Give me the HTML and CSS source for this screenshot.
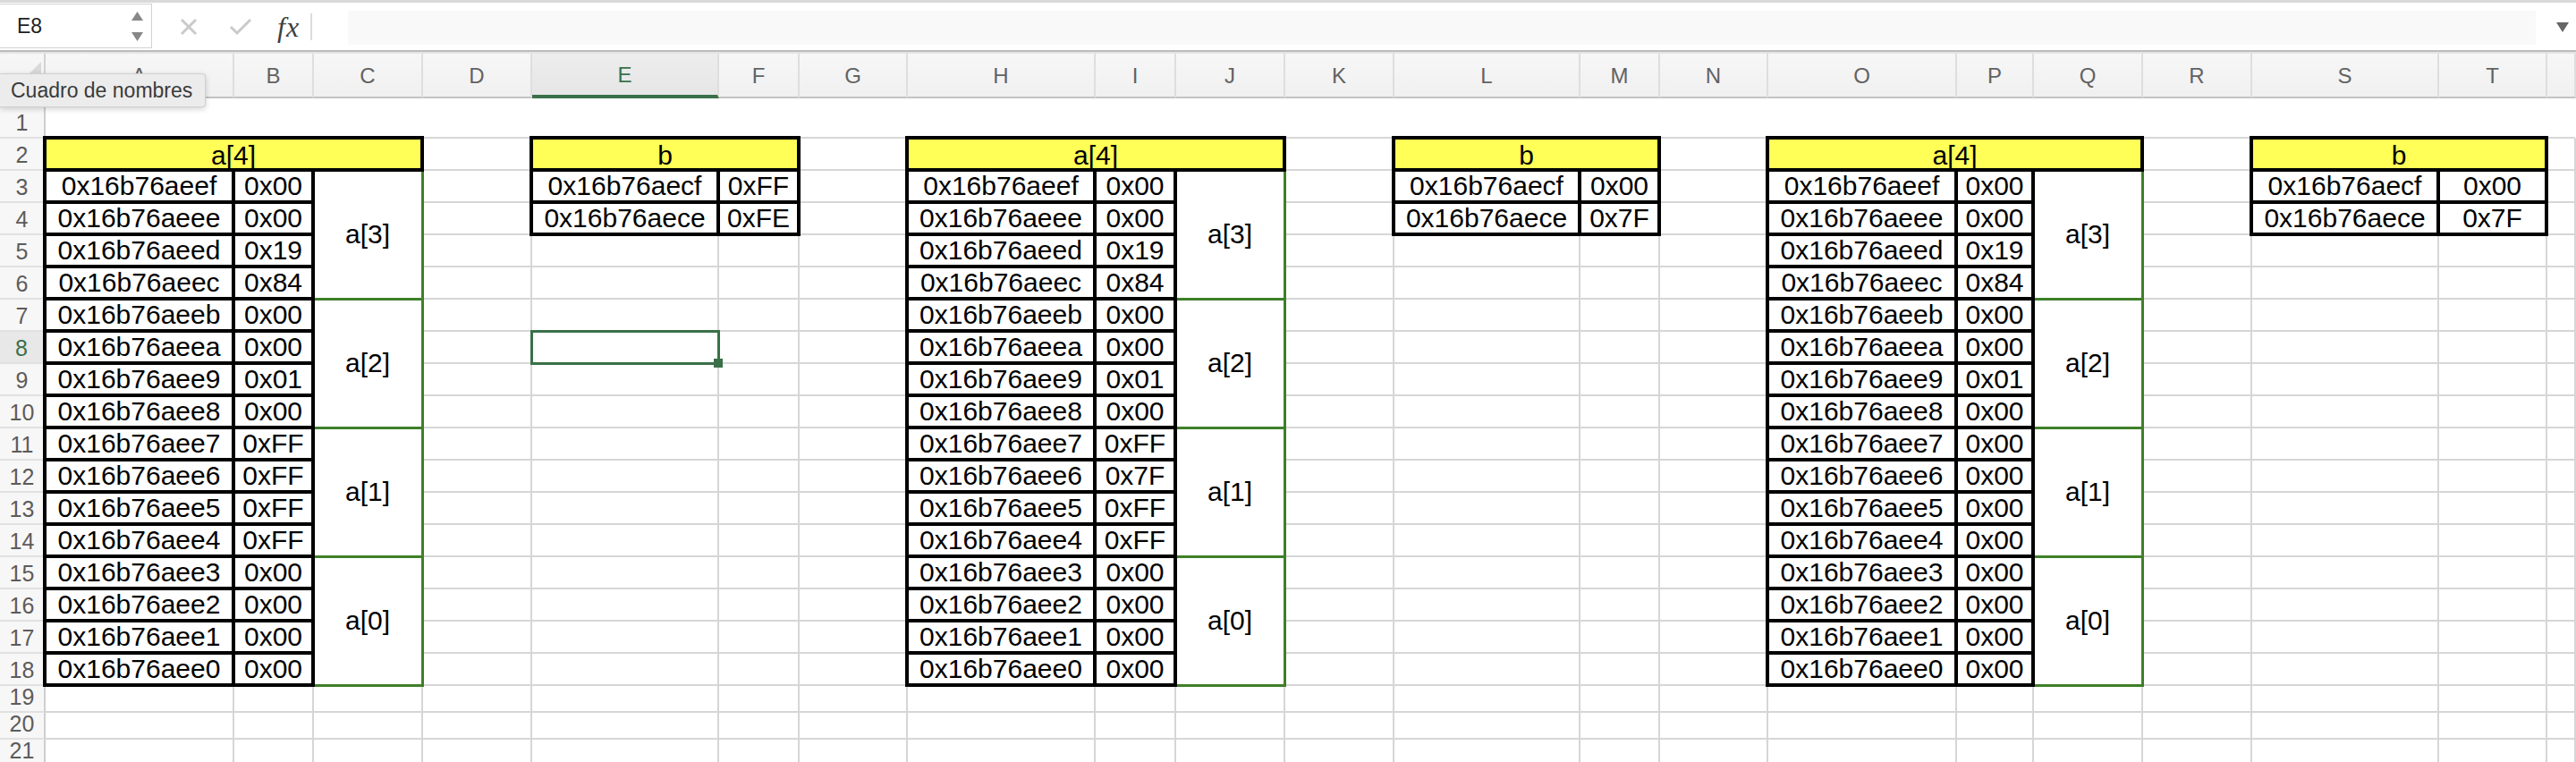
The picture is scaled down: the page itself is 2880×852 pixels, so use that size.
FILE: index.html
```html
<!DOCTYPE html>
<html lang="es">
<head>
<meta charset="utf-8">
<title>Hoja</title>
<link rel="stylesheet" href="styles.css">
</head>
<body>
<div class="app">
  <div class="toolbar">
    <div class="namebox">
      <span class="ref">E8</span>
      <span class="spin">
        <svg width="13" height="10" viewBox="0 0 13 10"><polygon points="6.5,0 13,10 0,10" fill="#888"/></svg>
        <svg width="13" height="10" viewBox="0 0 13 10"><polygon points="0,0 13,0 6.5,10" fill="#888"/></svg>
      </span>
    </div>
    <div class="fbtns">
      <svg class="ic-x" width="22" height="20" viewBox="0 0 22 20"><path d="M3 2 L19 18 M19 2 L3 18" stroke="#cacaca" stroke-width="3" fill="none"/></svg>
      <svg class="ic-ok" width="28" height="20" viewBox="0 0 28 20"><path d="M3 10 L10 17 L25 2" stroke="#cacaca" stroke-width="3" fill="none"/></svg>
      <span class="fx">fx</span>
      <span class="vsep"></span>
    </div>
    <div class="formula"></div>
    <svg class="drop" width="14" height="11" viewBox="0 0 14 11"><polygon points="0,0 14,0 7,11" fill="#666"/></svg>
  </div>
  <div class="divider"></div>

  <div class="sheet">
    <div class="corner"><svg width="34" height="34" viewBox="0 0 34 34"><polygon points="34,0 34,34 0,34" fill="#d9d9d9"/></svg></div>
    <div class="ch">A</div><div class="ch">B</div><div class="ch">C</div><div class="ch">D</div><div class="ch sc">E</div><div class="ch">F</div><div class="ch">G</div><div class="ch">H</div><div class="ch">I</div><div class="ch">J</div><div class="ch">K</div><div class="ch">L</div><div class="ch">M</div><div class="ch">N</div><div class="ch">O</div><div class="ch">P</div><div class="ch">Q</div><div class="ch">R</div><div class="ch">S</div><div class="ch">T</div><div class="ch"></div>

    <div class="rh lo">1</div><div class="r1"></div><div class="r1"></div><div class="r1"></div><div class="r1"></div><div class="r1"></div><div class="r1"></div><div class="r1"></div><div class="r1"></div><div class="r1"></div><div class="r1"></div><div class="r1"></div><div class="r1"></div><div class="r1"></div><div class="r1"></div><div class="r1"></div><div class="r1"></div><div class="r1"></div><div class="r1"></div><div class="r1"></div><div class="r1"></div><div class="r1"></div>

    <div class="rh">2</div><div class="hd s3">a[4]</div><div></div><div class="hd s2">b</div><div></div><div class="hd s3">a[4]</div><div></div><div class="hd s2">b</div><div></div><div class="hd s3">a[4]</div><div></div><div class="hd s2">b</div><div></div>

    <div class="rh">3</div><div class="t">0x16b76aeef</div><div class="t">0x00</div><div class="g">a[3]</div><div></div><div class="t">0x16b76aecf</div><div class="t">0xFF</div><div></div><div class="t">0x16b76aeef</div><div class="t">0x00</div><div class="g">a[3]</div><div></div><div class="t">0x16b76aecf</div><div class="t">0x00</div><div></div><div class="t">0x16b76aeef</div><div class="t">0x00</div><div class="g">a[3]</div><div></div><div class="t">0x16b76aecf</div><div class="t">0x00</div><div></div>

    <div class="rh">4</div><div class="t">0x16b76aeee</div><div class="t">0x00</div><div></div><div class="t">0x16b76aece</div><div class="t">0xFE</div><div></div><div class="t">0x16b76aeee</div><div class="t">0x00</div><div></div><div class="t">0x16b76aece</div><div class="t">0x7F</div><div></div><div class="t">0x16b76aeee</div><div class="t">0x00</div><div></div><div class="t">0x16b76aece</div><div class="t">0x7F</div><div></div>

    <div class="rh">5</div><div class="t">0x16b76aeed</div><div class="t">0x19</div><div></div><div></div><div></div><div></div><div class="t">0x16b76aeed</div><div class="t">0x19</div><div></div><div></div><div></div><div></div><div class="t">0x16b76aeed</div><div class="t">0x19</div><div></div><div></div><div></div><div></div>

    <div class="rh">6</div><div class="t">0x16b76aeec</div><div class="t">0x84</div><div></div><div></div><div></div><div></div><div class="t">0x16b76aeec</div><div class="t">0x84</div><div></div><div></div><div></div><div></div><div class="t">0x16b76aeec</div><div class="t">0x84</div><div></div><div></div><div></div><div></div>

    <div class="rh">7</div><div class="t">0x16b76aeeb</div><div class="t">0x00</div><div class="g">a[2]</div><div></div><div></div><div></div><div></div><div class="t">0x16b76aeeb</div><div class="t">0x00</div><div class="g">a[2]</div><div></div><div></div><div></div><div></div><div class="t">0x16b76aeeb</div><div class="t">0x00</div><div class="g">a[2]</div><div></div><div></div><div></div><div></div>

    <div class="rh sr">8</div><div class="t">0x16b76aeea</div><div class="t">0x00</div><div></div><div class="sel"><span class="handle"></span></div><div></div><div></div><div class="t">0x16b76aeea</div><div class="t">0x00</div><div></div><div></div><div></div><div></div><div class="t">0x16b76aeea</div><div class="t">0x00</div><div></div><div></div><div></div><div></div>

    <div class="rh">9</div><div class="t">0x16b76aee9</div><div class="t">0x01</div><div></div><div></div><div></div><div></div><div class="t">0x16b76aee9</div><div class="t">0x01</div><div></div><div></div><div></div><div></div><div class="t">0x16b76aee9</div><div class="t">0x01</div><div></div><div></div><div></div><div></div>

    <div class="rh">10</div><div class="t">0x16b76aee8</div><div class="t">0x00</div><div></div><div></div><div></div><div></div><div class="t">0x16b76aee8</div><div class="t">0x00</div><div></div><div></div><div></div><div></div><div class="t">0x16b76aee8</div><div class="t">0x00</div><div></div><div></div><div></div><div></div>

    <div class="rh">11</div><div class="t">0x16b76aee7</div><div class="t">0xFF</div><div class="g">a[1]</div><div></div><div></div><div></div><div></div><div class="t">0x16b76aee7</div><div class="t">0xFF</div><div class="g">a[1]</div><div></div><div></div><div></div><div></div><div class="t">0x16b76aee7</div><div class="t">0x00</div><div class="g">a[1]</div><div></div><div></div><div></div><div></div>

    <div class="rh">12</div><div class="t">0x16b76aee6</div><div class="t">0xFF</div><div></div><div></div><div></div><div></div><div class="t">0x16b76aee6</div><div class="t">0x7F</div><div></div><div></div><div></div><div></div><div class="t">0x16b76aee6</div><div class="t">0x00</div><div></div><div></div><div></div><div></div>

    <div class="rh">13</div><div class="t">0x16b76aee5</div><div class="t">0xFF</div><div></div><div></div><div></div><div></div><div class="t">0x16b76aee5</div><div class="t">0xFF</div><div></div><div></div><div></div><div></div><div class="t">0x16b76aee5</div><div class="t">0x00</div><div></div><div></div><div></div><div></div>

    <div class="rh">14</div><div class="t">0x16b76aee4</div><div class="t">0xFF</div><div></div><div></div><div></div><div></div><div class="t">0x16b76aee4</div><div class="t">0xFF</div><div></div><div></div><div></div><div></div><div class="t">0x16b76aee4</div><div class="t">0x00</div><div></div><div></div><div></div><div></div>

    <div class="rh">15</div><div class="t">0x16b76aee3</div><div class="t">0x00</div><div class="g">a[0]</div><div></div><div></div><div></div><div></div><div class="t">0x16b76aee3</div><div class="t">0x00</div><div class="g">a[0]</div><div></div><div></div><div></div><div></div><div class="t">0x16b76aee3</div><div class="t">0x00</div><div class="g">a[0]</div><div></div><div></div><div></div><div></div>

    <div class="rh">16</div><div class="t">0x16b76aee2</div><div class="t">0x00</div><div></div><div></div><div></div><div></div><div class="t">0x16b76aee2</div><div class="t">0x00</div><div></div><div></div><div></div><div></div><div class="t">0x16b76aee2</div><div class="t">0x00</div><div></div><div></div><div></div><div></div>

    <div class="rh">17</div><div class="t">0x16b76aee1</div><div class="t">0x00</div><div></div><div></div><div></div><div></div><div class="t">0x16b76aee1</div><div class="t">0x00</div><div></div><div></div><div></div><div></div><div class="t">0x16b76aee1</div><div class="t">0x00</div><div></div><div></div><div></div><div></div>

    <div class="rh">18</div><div class="t">0x16b76aee0</div><div class="t">0x00</div><div></div><div></div><div></div><div></div><div class="t">0x16b76aee0</div><div class="t">0x00</div><div></div><div></div><div></div><div></div><div class="t">0x16b76aee0</div><div class="t">0x00</div><div></div><div></div><div></div><div></div>

    <div class="rh lo">19</div><div></div><div></div><div></div><div></div><div></div><div></div><div></div><div></div><div></div><div></div><div></div><div></div><div></div><div></div><div></div><div></div><div></div><div></div><div></div><div></div><div></div>
    <div class="rh lo">20</div><div></div><div></div><div></div><div></div><div></div><div></div><div></div><div></div><div></div><div></div><div></div><div></div><div></div><div></div><div></div><div></div><div></div><div></div><div></div><div></div><div></div>
    <div class="rh lo">21</div><div></div><div></div><div></div><div></div><div></div><div></div><div></div><div></div><div></div><div></div><div></div><div></div><div></div><div></div><div></div><div></div><div></div><div></div><div></div><div></div><div></div>
  </div>

  <div class="tooltip">Cuadro de nombres</div>
</div>
</body>
</html>
```

FILE: styles.css
```css
html, body {
  margin: 0;
  padding: 0;
  background: #fff;
}
body {
  width: 2880px;
  height: 852px;
  overflow: hidden;
  font-family: "Liberation Sans", Arial, sans-serif;
  color: #000;
}
.app {
  position: relative;
  width: 2880px;
  height: 852px;
  overflow: hidden;
}

/* ---------- formula bar ---------- */
.toolbar {
  display: flex;
  align-items: flex-start;
  height: 56px;
  box-sizing: border-box;
  border-top: 3px solid #d9d9d9;
  background: #fff;
}
.namebox {
  width: 170px;
  height: 50px;
  margin-top: 1px;
  box-sizing: border-box;
  border: 1px solid #d2d2d2;
  border-left: 0;
  display: flex;
  align-items: center;
  padding-left: 19px;
  font-size: 23px;
  color: #1e1e1e;
}
.spin {
  margin-left: auto;
  margin-right: 9px;
  display: flex;
  flex-direction: column;
  gap: 13px;
}
.spin svg { display: block; }
.fbtns {
  width: 205px;
  height: 53px;
  display: flex;
  align-items: center;
}
.ic-x { margin-left: 30px; }
.ic-ok { margin-left: 33px; }
.fx {
  margin-left: 27px;
  font-family: "Liberation Serif", "Times New Roman", serif;
  font-style: italic;
  font-size: 32px;
  color: #3e3e3e;
  letter-spacing: 1px;
  line-height: 1;
}
.vsep {
  margin-left: 12px;
  width: 2px;
  height: 30px;
  background: #dcdcdc;
}
.formula {
  flex: 1;
  height: 38px;
  margin-top: 9px;
  margin-left: 14px;
  background: #f9f9f9;
}
.drop {
  margin: 22px 8px 0 23px;
}
.divider {
  height: 4px;
  box-sizing: border-box;
  border-top: 2px solid #bcbcbc;
  background: #e4e4e4;
}

/* ---------- sheet grid ---------- */
.sheet {
  display: grid;
  grid-template-columns: 51px 211px 89px 122px 122px 209px 90px 121px 210px 90px 122px 122px 208px 89px 121px 211px 86px 122px 122px 209px 121px 1fr;
  grid-template-rows: 50px 45px repeat(17, 36px) repeat(3, 30px);
}
.sheet > div {
  box-sizing: border-box;
  border-right: 2px solid #d6d6d6;
  border-bottom: 2px solid #d6d6d6;
  min-width: 0;
}
.sheet > .r1 { border-right-color: transparent; }

.corner {
  background: linear-gradient(#f7f7f7, #f0f0f0);
  display: flex;
  align-items: flex-end;
  justify-content: flex-end;
  padding: 0 3px 5px 0;
}
.corner svg { display: block; }
.sheet > .corner { border-bottom: 2px solid #c3c3c3; border-right: 2px solid #d2d2d2; }

.ch {
  background: linear-gradient(#f7f7f7, #f0f0f0);
  display: flex;
  align-items: center;
  justify-content: center;
  font-size: 24px;
  color: #626262;
  padding-top: 2px;
}
.sheet > .ch { border-right: 2px solid #dedede; border-bottom: 2px solid #c3c3c3; }
.sheet > .ch.sc {
  color: #3a7049;
  background: linear-gradient(#ededed, #e6e6e6);
  border-bottom: 4px solid #3a7049;
}

.rh {
  background: #f7f7f7;
  display: flex;
  align-items: center;
  justify-content: center;
  font-size: 25px;
  color: #5c5c5c;
  padding-top: 3px;
}
.rh.lo {
  align-items: flex-end;
  padding-top: 0;
  padding-bottom: 1px;
}
.sheet > .rh { border-right: 2px solid #cfcfcf; border-bottom: 2px solid #e1e1e1; }
.sheet > .rh.sr {
  color: #3a7049;
  background: #e8e8e8;
  border-right: 3px solid #3a7049;
}

/* ---------- bordered table cells ---------- */
.t, .hd, .g {
  position: relative;
  display: flex;
  align-items: center;
  justify-content: center;
  font-size: 30px;
  white-space: nowrap;
  color: #000;
}
.hd {
  background: #ffff57;
  padding-top: 4px;
}
.s3 { grid-column: span 3; }
.s2 { grid-column: span 2; }
.g { grid-row: span 4; }

.t::after, .hd::after, .g::after, .sel::after {
  content: "";
  position: absolute;
  top: -3px;
  left: -3px;
  right: -3px;
  bottom: -3px;
  border: 4px solid #000;
  z-index: 2;
  pointer-events: none;
}
.g::after {
  top: -2px;
  left: -2px;
  right: -3px;
  bottom: -3px;
  border: 3px solid #3f7f28;
  z-index: 1;
}

/* ---------- selected cell ---------- */
.sel { position: relative; }
.sel::after {
  top: -2px;
  left: -2px;
  right: -3px;
  bottom: -3px;
  border: 3px solid #3a7049;
  z-index: 3;
}
.handle {
  position: absolute;
  right: -6px;
  bottom: -6px;
  width: 10px;
  height: 10px;
  background: #3a7049;
  z-index: 4;
}

/* ---------- tooltip ---------- */
.tooltip {
  position: absolute;
  left: 0;
  top: 82px;
  width: 230px;
  height: 38px;
  box-sizing: border-box;
  padding-left: 12px;
  display: flex;
  align-items: center;
  background: #ececec;
  border: 1px solid #d0d0d0;
  border-left: 0;
  border-radius: 0 4px 4px 0;
  box-shadow: 0 2px 6px rgba(0, 0, 0, 0.18);
  font-size: 23px;
  color: #3a3a3a;
  z-index: 10;
}
```
